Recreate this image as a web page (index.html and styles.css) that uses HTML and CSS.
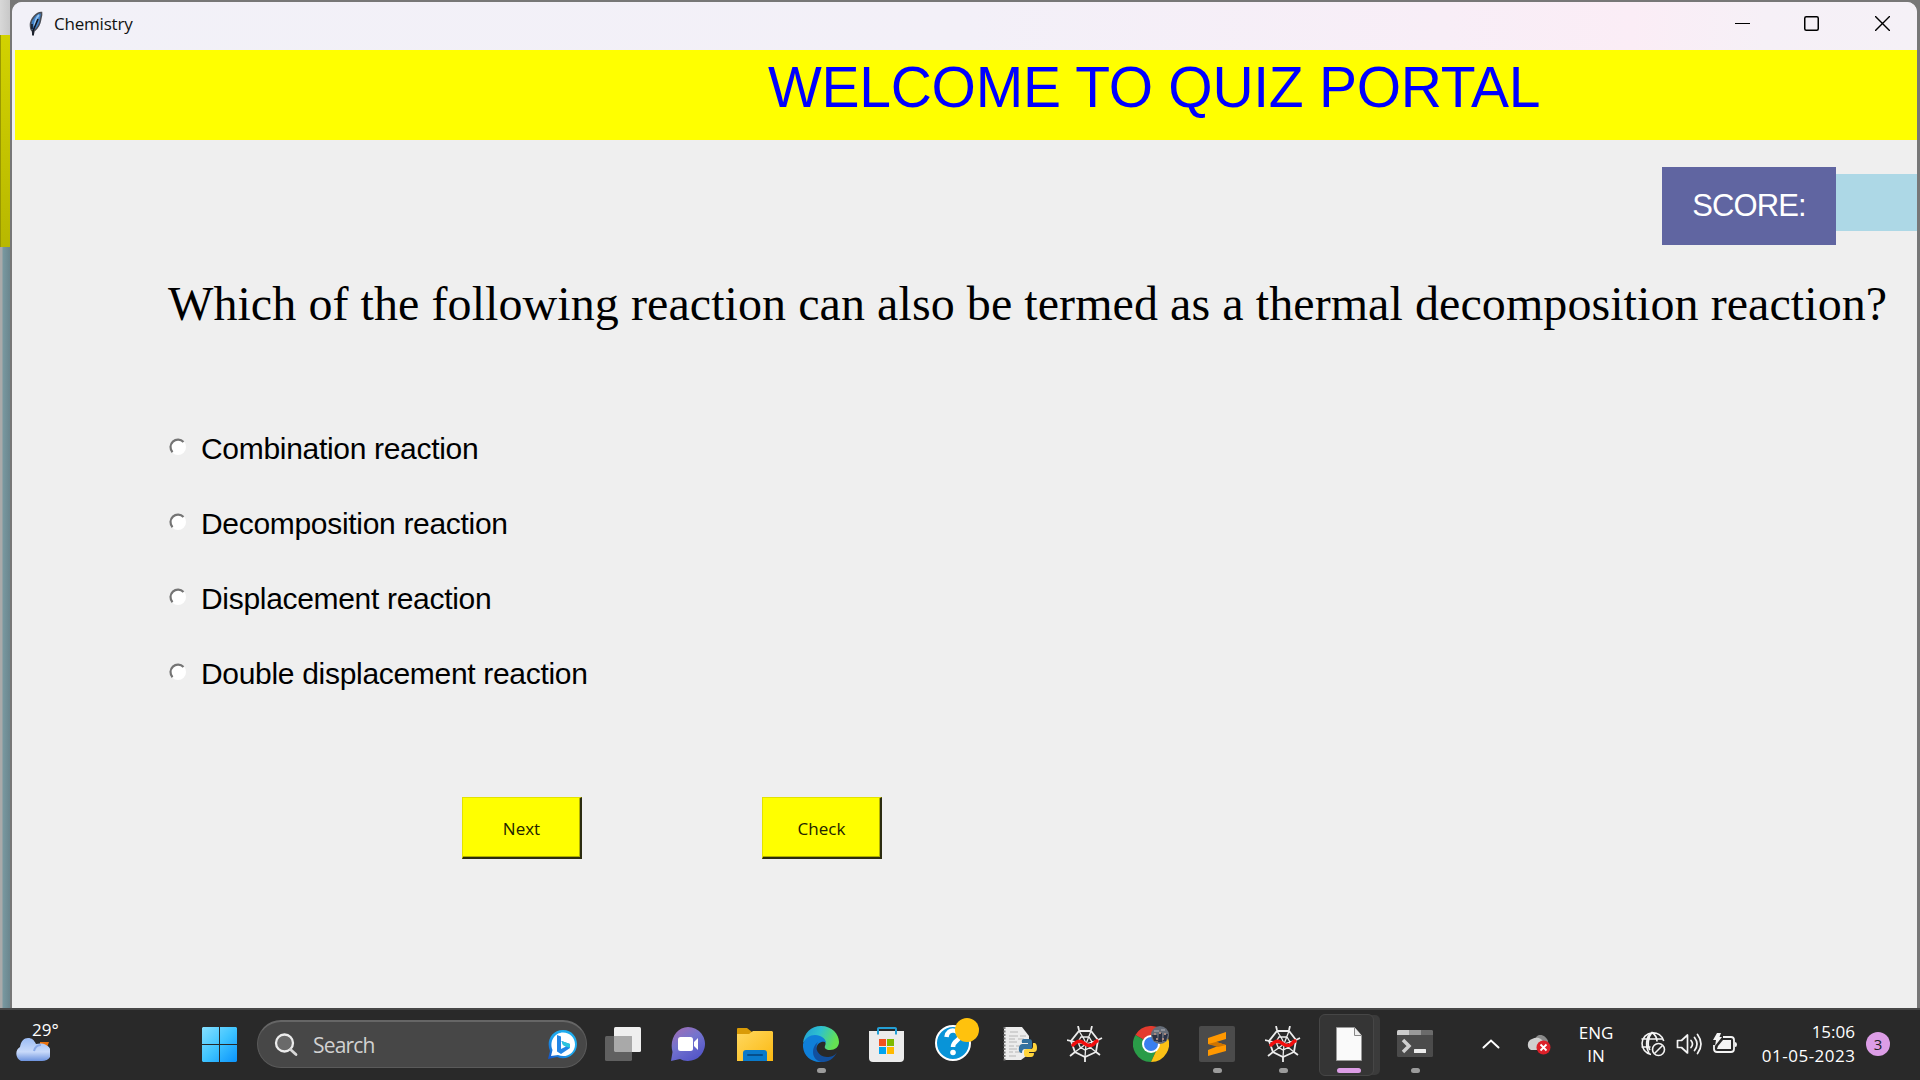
FILE: index.html
```html
<!DOCTYPE html>
<html lang="en">
<head>
<meta charset="utf-8">
<title>Chemistry</title>
<link rel="stylesheet" href="styles.css">
</head>
<body>
<div class="desktop">
  <div class="workspace">
    <div class="behind"><i class="b-title"></i><i class="b-banner"></i><i class="b-body"></i></div>
    <main class="window">
      <header class="titlebar">
        <svg class="feather" width="14" height="26" viewBox="0 0 14 26"><path d="M12.500 1.500C8 1 1.500 8 1.500 14c0 3 .5 5 2 6L4 24l1-4c4-3 6-7 6.500-11 .5-3 1.500-5 1-7.500z" fill="#3f7fc4" stroke="#4a4d55" stroke-width="1.600"/><path d="M10 4C7 7 6 11 5.500 15" stroke="#91c1ef" stroke-width="1.800" fill="none"/><path d="M9 8L4 20v4.500M3 13v5" stroke="#121722" stroke-width="1.600" fill="none"/></svg>
        <span class="title">Chemistry</span>
        <div class="controls">
          <svg width="15" height="15" viewBox="0 0 15 15"><path d="M0 7.500h15" stroke="#000"/></svg>
          <svg width="15" height="15" viewBox="0 0 15 15"><rect x=".75" y=".75" width="13.500" height="13.500" rx="1.500" fill="none" stroke="#000" stroke-width="1.500"/></svg>
          <svg width="15" height="15" viewBox="0 0 15 15"><path d="M0 0l15 15M15 0L0 15" stroke="#000" stroke-width="1.400"/></svg>
        </div>
      </header>
      <h1 class="banner"><span>WELCOME TO QUIZ PORTAL</span></h1>
      <div class="score"><span class="score-label">SCORE:</span><span class="score-value"></span></div>
      <p class="question">Which of the following reaction can also be termed as a thermal decomposition reaction?</p>
      <div class="options">
        <label class="option"><svg class="radio" width="18" height="18" viewBox="0 0 18 18"><circle cx="9" cy="9" r="8" fill="#fff"/><path d="M3.500 14.200A7.300 7.300 0 0 1 14.500 4" fill="none" stroke="#747474" stroke-width="2.200"/></svg><span>Combination reaction</span></label>
        <label class="option"><svg class="radio" width="18" height="18" viewBox="0 0 18 18"><circle cx="9" cy="9" r="8" fill="#fff"/><path d="M3.500 14.200A7.300 7.300 0 0 1 14.500 4" fill="none" stroke="#747474" stroke-width="2.200"/></svg><span>Decomposition reaction</span></label>
        <label class="option"><svg class="radio" width="18" height="18" viewBox="0 0 18 18"><circle cx="9" cy="9" r="8" fill="#fff"/><path d="M3.500 14.200A7.300 7.300 0 0 1 14.500 4" fill="none" stroke="#747474" stroke-width="2.200"/></svg><span>Displacement reaction</span></label>
        <label class="option"><svg class="radio" width="18" height="18" viewBox="0 0 18 18"><circle cx="9" cy="9" r="8" fill="#fff"/><path d="M3.500 14.200A7.300 7.300 0 0 1 14.500 4" fill="none" stroke="#747474" stroke-width="2.200"/></svg><span>Double displacement reaction</span></label>
      </div>
      <div class="actions"><button class="btn">Next</button><button class="btn">Check</button></div>
    </main>
  </div>
  <footer class="taskbar">
    <div class="weather"><span>29°</span>
      <svg width="38" height="26" viewBox="0 0 38 26"><defs><linearGradient id="cl" x1="0" y1="0" x2="0" y2="1"><stop offset="0" stop-color="#9bbcf5"/><stop offset=".6" stop-color="#c9dafa"/><stop offset="1" stop-color="#6d93de"/></linearGradient></defs><path d="M28 5h9l-3 8h-6z" fill="#e8710f"/><path d="M9 24a8 8 0 0 1-1-14C9 4 12 1 16 1c4 0 6 2 8 6 8-2 15 2 15 9 0 5-4 8-9 8z" fill="url(#cl)"/><path d="M22 14c1-4 4-6 7-6" stroke="#88a9e8" stroke-width="2" fill="none"/></svg>
    </div>
    <svg class="start" width="35" height="35" viewBox="0 0 35 35"><defs><linearGradient id="wn" gradientUnits="userSpaceOnUse" x1="0" y1="0" x2="35" y2="35"><stop offset="0" stop-color="#86e0ff"/><stop offset=".5" stop-color="#3fc4ff"/><stop offset="1" stop-color="#0a93fb"/></linearGradient></defs><path d="M1 0h16v17H0V1zM18 0h16l1 1v16H18zM0 18h17v17H1l-1-1zM18 18h17v16l-1 1H18z" fill="url(#wn)"/></svg>
    <div class="search">
      <svg width="24" height="24" viewBox="0 0 24 24"><circle cx="10.500" cy="10" r="8.500" fill="#6a6a6a" stroke="#ececec" stroke-width="2.300"/><path d="M16.500 16.500l5.500 5" stroke="#d8d8d8" stroke-width="2.800" stroke-linecap="round"/></svg>
      <span>Search</span>
      <svg class="bing" width="31" height="31" viewBox="0 0 31 31"><defs><linearGradient id="bg" x1="0" y1="1" x2="1" y2="0"><stop offset="0" stop-color="#1450c8"/><stop offset=".45" stop-color="#1ca4ee"/><stop offset="1" stop-color="#1fb0ee"/></linearGradient></defs><path d="M1 30l2-8C-1 13 4 1 16 1c9 0 14 7 14 14 0 11-11 17-20 13z" fill="url(#bg)"/><path d="M4 27l1.500-6C2 12 8 3.500 16 3.500c7 0 12 5 12 12 0 9-9 14-17 10.500z" fill="#fff"/><path d="M10 6l4 1.500V20l5-2.500-3-1.500-1.500-4L23 15v4l-9 6-4-2.500z" fill="#2386e6"/><path d="M14.500 12L23 15v4l-4-1.500-3-1.500z" fill="#2bc6dd"/></svg>
    </div>
    <nav class="apps">
      <div class="app"><svg width="36" height="36" viewBox="0 0 36 36"><rect x="9" y="1" width="27" height="25" rx="1.500" fill="#efefef"/><rect y="10" width="27" height="25" rx="1.500" fill="#606060"/><path d="M9 10h17l1 1v15H10l-1-1z" fill="#a9a9a9"/></svg></div>
      <div class="app"><svg width="36" height="36" viewBox="0 0 36 36"><defs><linearGradient id="ch" x1="0" y1="0" x2=".6" y2="1"><stop offset="0" stop-color="#a66bb0"/><stop offset=".5" stop-color="#7474ce"/><stop offset="1" stop-color="#5557c8"/></linearGradient></defs><path d="M0 35l1.500-9C-2 13 6 1 17 1a17 17 0 1 1-8 32z" fill="url(#ch)"/><rect x="7" y="11" width="15" height="14" rx="2.500" fill="#fff"/><path d="M23 16l4-4v12l-4-4z" fill="#fff"/></svg></div>
      <div class="app"><svg width="36" height="36" viewBox="0 0 36 36"><defs><linearGradient id="fo" x1="0" y1="0" x2="1" y2="1"><stop offset="0" stop-color="#ffd860"/><stop offset="1" stop-color="#fbb911"/></linearGradient></defs><path d="M0 3q0-1 1-1h9l5 4v6H0z" fill="#d99b07"/><path d="M0 8h12l4-3h19l1 1v29H0z" fill="url(#fo)"/><path d="M6 35v-8q0-3 3-3h18q3 0 3 3v8z" fill="#0a7acb"/><path d="M11 29h14" stroke="#064f8c" stroke-width="2" stroke-linecap="round"/></svg></div>
      <div class="app run"><svg width="36" height="36" viewBox="0 0 36 36"><defs><linearGradient id="e1" x1="0" y1="0" x2="1" y2=".3"><stop offset="0" stop-color="#1f9bd5"/><stop offset=".5" stop-color="#2ec1cf"/><stop offset="1" stop-color="#64e152"/></linearGradient></defs><path d="M0 17C1 7 8 0 18 0c11 0 18 8 18 16 0 5-4 8-9 8-4 0-6-2-5-4 2-4-1-9-7-9C8 11 2 14 0 17z" fill="url(#e1)"/><path d="M0 18c2-6 7-9 12-9 6 0 11 4 11 8-2-3-9-1-10 6-1 6 4 12 10 12C10 39-1 30 0 18z" fill="#0f7fd9"/><path d="M15 16c-4 6 0 15 9 15 4 0 8-1 10-5-3 7-9 10-15 10C9 35 7 22 15 16z" fill="#12509f"/></svg></div>
      <div class="app"><svg width="36" height="36" viewBox="0 0 36 36"><path d="M9 8V2.500q0-.5 1-.5h16q1 0 1 .5V8" fill="none" stroke="#249fd5" stroke-width="2"/><path d="M0 5h35v27q0 4-4 4H4q-4 0-4-4z" fill="#ececec"/><path d="M8 5v3.500h2V5M26 5v3.500h2V5" fill="#249fd5"/><path d="M10 13h7v7h-7z" fill="#f25022"/><path d="M18 13h7v7h-7z" fill="#7fba00"/><path d="M10 21h7v7h-7z" fill="#00a4ef"/><path d="M18 21h7v7h-7z" fill="#ffb900"/></svg></div>
      <div class="app"><svg class="help" width="46" height="46" viewBox="0 0 46 46"><circle cx="18" cy="26" r="17" fill="#0894d8" stroke="#fff" stroke-width="2"/><path d="M11.500 20c1-10 14-7 13 0-.6 4-6.500 4-6.500 10" fill="none" stroke="#fff" stroke-width="4.500"/><circle cx="18" cy="35.500" r="2.800" fill="#fff"/><circle cx="32" cy="13" r="12" fill="#ffc20d"/></svg></div>
      <div class="app"><svg width="36" height="36" viewBox="0 0 36 36"><path d="M3 1h18l7 9v18l-8 6H3z" fill="#ececec"/><path d="M3.500 1v34" stroke="#777" stroke-width="2" stroke-dasharray="2 1.500"/><path d="M9 6h8M8 10h9m2 0h6M8 13h6m3 0h6M8 16h8M8 20h5m2 0h4M8 23h8M8 26h4m2 0h5M8 30h7" stroke="#b6b6b6"/><path d="M23 13h5q3 0 3 3v5q0 2-3 2h-4q-3 0-3 4h-1q-3-1-2-6 1-3 3-3h6v-1h-6q-1-4 2-4z" fill="#34719f"/><path d="M32 17h2q2 1 2 5 0 4-3 4h-5v1h5q0 4-3 4h-4q-3 0-3-3v-3q0-2 3-2h4q2 0 2-3z" fill="#ffd43b"/></svg></div>
      <div class="app"><svg width="36" height="36" viewBox="0 0 36 36"><g fill="none" stroke="#ededed"><path d="M12 5h12l7 9-2 12-11 5-10-5-4-11z" stroke-width="1.800"/><path d="M12 5l5 8 2 5 5-13M19 18l12-4M19 18l10 8M19 18l-1 13M19 18L8 26M19 18L4 15M14 11h8l3 5-1 5-6 3-5-3-2-5z" stroke-width="1.300"/><path d="M12 4l-1-4M24 4l1-4M31 14l4-2M29 26l4 3M18 31v5M8 26l-5 4M4 15l-4-1" stroke-width="1.800"/></g><path d="M6 19c3-3 6-5 9-3 4 2 6 5 10 3 3-1 2-3 5-4" fill="none" stroke="#f20d0d" stroke-width="3.500" stroke-linecap="round"/></svg></div>
      <div class="app"><svg width="36" height="36" viewBox="0 0 36 36"><path d="M18 18L2.400 9A18 18 0 0 1 33.600 9z" fill="#e33b2e"/><path d="M18 18L2.400 9A18 18 0 0 0 18 36l6-13z" fill="#2a9c48"/><path d="M18 18l6 5-6 13A18 18 0 0 0 33.600 9H18z" fill="#fbc116"/><circle cx="18" cy="18" r="9" fill="#fff"/><circle cx="18" cy="18" r="7" fill="#3a7fee"/><circle cx="27" cy="9" r="9" fill="#666d78"/><path d="M19 9h5l1 6h-4zM26 7h3v9h-4zM31 8h4l-2 7h-3z" fill="#2b3144"/><path d="M21 4h5v2h-5zM28 3h4v2h-4z" fill="#8d9098"/><path d="M21 7h2v2h-2zM26 6h2v2h-2zM31 7h2v2h-2zM23 12h2v2h-2zM29 12h2v2h-2z" fill="#a98a80"/></svg></div>
      <div class="app run"><svg width="36" height="36" viewBox="0 0 36 36"><rect width="36" height="36" rx="2" fill="#4b4b4b"/><path d="M9 12l18-6v7l-10 3 10 3v6L9 30v-6l10-4-10-2z" fill="#ff9800"/><path d="M9 18l8-2 10 3-8 2z" fill="#cf7400"/></svg></div>
      <div class="app run"><svg width="36" height="36" viewBox="0 0 36 36"><g fill="none" stroke="#ededed"><path d="M12 5h12l7 9-2 12-11 5-10-5-4-11z" stroke-width="1.800"/><path d="M12 5l5 8 2 5 5-13M19 18l12-4M19 18l10 8M19 18l-1 13M19 18L8 26M19 18L4 15M14 11h8l3 5-1 5-6 3-5-3-2-5z" stroke-width="1.300"/><path d="M12 4l-1-4M24 4l1-4M31 14l4-2M29 26l4 3M18 31v5M8 26l-5 4M4 15l-4-1" stroke-width="1.800"/></g><path d="M6 19c3-3 6-5 9-3 4 2 6 5 10 3 3-1 2-3 5-4" fill="none" stroke="#f20d0d" stroke-width="3.500" stroke-linecap="round"/></svg></div>
      <div class="app active"><svg width="36" height="36" viewBox="0 0 36 36"><path d="M5.500 1.500h18l7 8v25h-25z" fill="#fafafa" stroke="#999"/><path d="M23.500 1.500v8h7" fill="#eee" stroke="#888"/></svg></div>
      <div class="app run"><svg width="36" height="36" viewBox="0 0 36 36"><rect y="4" width="36" height="27" rx="1.500" fill="#4b4b4b"/><path d="M0 5.500Q0 4 1.500 4H12v5H0z" fill="#ccc"/><path d="M12 4h12v5H12z" fill="#999"/><path d="M24 4h11l1 1v4H24z" fill="#6b6b6b"/><path d="M6 14l6 6-6 6" fill="none" stroke="#cfcfcf" stroke-width="3.500"/><rect x="17" y="23" width="12" height="4" rx=".5" fill="#ededed"/></svg></div>
    </nav>
    <div class="tray">
      <svg class="chev" width="18" height="10" viewBox="0 0 18 10"><path d="M1.500 8.500L9 1.500l7.500 7" fill="none" stroke="#fff" stroke-width="2" stroke-linecap="round"/></svg>
      <svg class="cloud" width="25" height="22" viewBox="0 0 25 22"><path d="M8 8c3-10 12-6 14 0l-2 7H9z" fill="#8b8b8b"/><path d="M5 17a6 6 0 0 1 1-11c6-3 11 0 12 5l-4 6z" fill="#d0d0d0"/><circle cx="17.500" cy="14.500" r="7" fill="#dc2029"/><path d="M14.500 11.500l6 6m0-6l-6 6" stroke="#fff" stroke-width="1.800"/></svg>
      <div class="lang"><span>ENG</span><span>IN</span></div>
      <div class="status">
        <svg width="26" height="26" viewBox="0 0 26 26" fill="none" stroke="#f4f4f4" stroke-width="1.600"><path d="M11 23.500A11 11 0 1 1 23.700 10M1.500 8h21M1.500 16h9M9 22C5 15 6 5 12 1.500c3 2 5 5 5 9M12 1.500C8 6 7 15 10 19"/><circle cx="18.500" cy="18.500" r="6"/><path d="M14.500 22.500l8-8"/></svg>
        <svg width="26" height="22" viewBox="0 0 26 22" fill="none" stroke="#f4f4f4" stroke-width="1.700" stroke-linejoin="round" stroke-linecap="round"><path d="M1.500 7.500h4l6-5.500v18l-6-5.500h-4zM15 7.500q3 3.500 0 7M18.500 4.500q5 6.500 0 13M21.500 1.500q7 9.500 0 19"/></svg>
        <svg width="26" height="22" viewBox="0 0 26 22"><path d="M11 4h8q3 0 3 3v9q0 3-3 3H5q-3 0-3-3v-4" fill="none" stroke="#f4f4f4" stroke-width="1.800"/><path d="M11 7h8v9H5l1-3z" fill="#f4f4f4"/><path d="M23 9q2 0 2 2.500T23 14zM5 0h4L7.500 4H10L3 13l1-6H1z" fill="#f4f4f4"/></svg>
      </div>
      <div class="clock"><span>15:06</span><span class="date">01-05-2023</span></div>
      <span class="badge">3</span>
    </div>
  </footer>
</div>
</body>
</html>
```
FILE: styles.css
```css
* { box-sizing: border-box; }
body { margin: 0; background: #777; font-family: "Open Sans", "Noto Sans", sans-serif; }
.desktop { width: 1920px; height: 1080px; display: flex; flex-direction: column; overflow: hidden; }
.workspace { height: 1008px; display: grid; grid-template-columns: 10px 1910px; background: #777; }
.behind { display: flex; flex-direction: column; }
.behind i { display: block; }
.b-title { height: 35px; background: linear-gradient(90deg, #d8d8d8, #c8c8c8); }
.b-banner { height: 212px; background: linear-gradient(#d2d200, #b8b800); border-left: 1px solid #999900; }
.b-body { flex: 1; background: linear-gradient(90deg, #aaa 0 2px, #7898a0 3px, #6b868e 10px); }
.window { width: 1909px; height: 1008px; border: 2px solid #777; border-bottom: 0; border-radius: 12px 12px 0 0; background: #efefef; overflow: hidden; display: flex; flex-direction: column; }
.titlebar { height: 48px; flex: none; display: flex; align-items: center; padding: 0 27px 5px 17px; background: linear-gradient(90deg, #f2f1f8 0%, #f3f0f8 50%, #f8eef7 75%, #fbedf6 85%, #f6f0f7 92%, #f5f1f7 100%); }
.title { font-size: 17px; margin: -1px 0 0 11px; letter-spacing: -.2px; color: #111; }
.controls { margin-left: auto; display: flex; gap: 56px; }
.controls svg { display: block; }
.controls svg:first-child { margin-right: -2px; }
.banner { margin: 0 0 0 3px; height: 90px; flex: none; background: #ff0; color: #00f; font: 400 57px/74px "Liberation Sans", Arial, sans-serif; padding-left: 753px; white-space: nowrap; letter-spacing: -.27px; }
.score { height: 78px; margin-top: 27px; display: flex; align-items: center; justify-content: flex-end; }
.score-label { width: 174px; height: 78px; background: #6065a1; color: #fff; font: 31px/78px "Liberation Sans", Arial, sans-serif; letter-spacing: -.9px; text-align: center; }
.score-value { width: 81px; height: 57px; background: #add8e6; margin-bottom: 7px; }
.question { margin: 29px 0 0 156px; height: 60px; font: 48px/60px "Liberation Serif", "Times New Roman", serif; letter-spacing: .075px; white-space: nowrap; color: #000; }
.options { margin: 77px 0 0 157px; display: flex; flex-direction: column; }
.option { height: 75px; display: flex; align-items: center; font: 30px/38px "Liberation Sans", Arial, sans-serif; letter-spacing: -.31px; color: #000; }
.radio { margin: 0 14px 4px 0; }
.actions { margin: 86px 0 0 450px; display: flex; gap: 180px; }
.btn { width: 120px; height: 62px; border: 1px solid #e2e200; border-right: 2px solid #2b2b10; border-bottom: 2px solid #2b2b10; box-shadow: inset -1px -1px #b0b000; background: #ff0; color: #222200; font: 17px "Open Sans", sans-serif; padding: 1px 0 0; }
.taskbar { height: 72px; border-top: 2px solid #474747; background: #292929; display: flex; align-items: center; color: #fff; }
.weather { width: 202px; height: 70px; position: relative; font-size: 17px; line-height: 20px; padding: 10px 0 0 32px; }
.weather svg { position: absolute; left: 12px; top: 27px; }
.start { margin-right: 20px; margin-bottom: 1px; }
.search { width: 330px; height: 48px; margin-bottom: 2px; border-radius: 24px; background: #474747; border: 1px solid #5a5a5a; border-top: 2px solid #666; display: flex; align-items: center; padding: 0 8px 0 16px; font-size: 21px; color: #d1d1d1; }
.search span { margin-left: 15px; line-height: 28px; letter-spacing: -.8px; }
.bing { margin-left: auto; }
.apps { display: flex; margin-left: 3px; height: 70px; }
.app { width: 66px; position: relative; display: flex; align-items: center; justify-content: center; padding-bottom: 2px; }
.app svg { position: relative; z-index: 1; }
.app .help { margin: -8px -10px 0 0; }
.run::after, .active::after { content: ""; position: absolute; bottom: 7px; left: 29px; width: 9px; height: 5px; border-radius: 3px; background: #9b9b9b; }
.active::after { left: 21px; width: 24px; background: #dc9de6; }
.active::before { content: ""; position: absolute; left: 3px; top: 4px; width: 53px; height: 60px; border-radius: 6px; background: #353535; border: 1px solid #464646; box-shadow: 7px 0 0 -1px #3b3b3b; }
.tray { flex: 1; display: flex; align-items: center; height: 70px; padding-bottom: 2px; }
.chev { margin-left: 34px; }
.cloud { margin-left: 26px; }
.lang { width: 60px; margin: 0 0 0 15px; display: flex; flex-direction: column; align-items: center; font-size: 17px; line-height: 23px; }
.status { display: flex; align-items: center; gap: 10px; margin-left: 14px; }
.clock { width: 117px; display: flex; flex-direction: column; align-items: flex-end; font-size: 17px; line-height: 24px; padding-bottom: 1px; }
.date { letter-spacing: .5px; margin-right: -.5px; }
.badge { width: 24px; height: 24px; margin-left: 11px; border-radius: 50%; background: #dc9de6; color: #222; font-size: 15px; line-height: 24px; text-align: center; }
```
